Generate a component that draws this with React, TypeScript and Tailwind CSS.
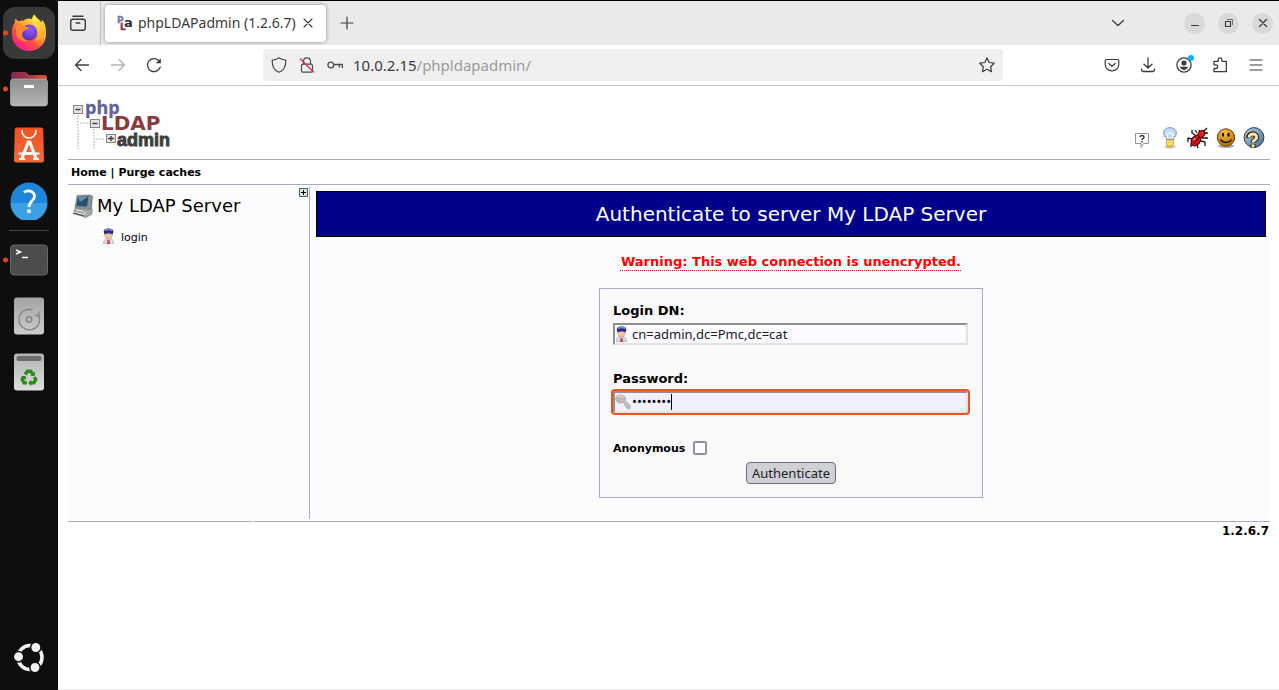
import type { ReactNode } from "react";

/* ---------- Dock icons ---------- */

function FirefoxIcon() {
  return (
    <svg width="36" height="38" viewBox="0 0 36 38" aria-hidden="true">
      <defs>
        <linearGradient id="fxBody" x1="0.85" y1="0.1" x2="0.2" y2="0.95">
          <stop offset="0" stopColor="#ffe94e" />
          <stop offset="0.35" stopColor="#ffa42e" />
          <stop offset="0.65" stopColor="#ff4a44" />
          <stop offset="1" stopColor="#f2179a" />
        </linearGradient>
        <linearGradient id="fxFlame" x1="0.3" y1="0" x2="0.8" y2="1">
          <stop offset="0" stopColor="#fff44f" />
          <stop offset="0.6" stopColor="#ffc22f" />
          <stop offset="1" stopColor="#ff9423" />
        </linearGradient>
        <radialGradient id="fxGlobe" cx="0.6" cy="0.3" r="0.75">
          <stop offset="0" stopColor="#9059ff" />
          <stop offset="1" stopColor="#5b2fb4" />
        </radialGradient>
      </defs>
      <path d="M1 15c.5-2.600 1.400-4.300 2.700-5.700C3.600 7.700 3.900 6 4.600 4.500c1 1.300 2 2.200 3.400 2.800 1.300-.7 2.900-.9 4.400-.6 3-3 9-3 12 .5 4.500 2.800 10.600 6 10.600 13.300C35 29.500 27.500 37 18 37S1 29.500 1 20.500z" fill="url(#fxBody)" />
      <path d="M23.300.5c-2.300 2-2.900 5.200-.8 7.700 2.500 2.900 5.500 5.500 5.500 10.300 0 3.500-1.600 6.500-4 8.500 5.500-1.200 9.800-4.200 10.800-9.200.6-4.300-1-9.300-4-12.300.1 1.300 0 2.200-.4 3C28.500 5 24.700 3.700 23.300.5z" fill="url(#fxFlame)" />
      <circle cx="18.300" cy="18.500" r="8" fill="url(#fxGlobe)" />
      <path d="M5.500 12.500c2.500-1.800 5.500-1.700 7.500-.5 1.500 1.100 3.200 1 5 1.200-.3 2-2.300 2.600-4.300 3.300-1.700.7-1.500 1.900-2.700 2.900-.5 4 2.900 7.300 7 7.300-5.500 2-12.500-1.300-13-8.200-.1-2.200.2-4.200.5-6z" fill="#ff8a30" />
    </svg>
  );
}

function FilesIcon() {
  return (
    <svg width="38" height="36" viewBox="0 0 38 36" aria-hidden="true">
      <defs>
        <linearGradient id="flBack" x1="0" y1="0" x2="1" y2="0">
          <stop offset="0" stopColor="#7b2952" />
          <stop offset="0.6" stopColor="#a93a45" />
          <stop offset="1" stopColor="#ea5a25" />
        </linearGradient>
        <linearGradient id="flFront" x1="0" y1="0" x2="0" y2="1">
          <stop offset="0" stopColor="#8d8d8d" />
          <stop offset="1" stopColor="#b5b5b5" />
        </linearGradient>
      </defs>
      <path d="M1 4q0-3 3-3h11q1.500 0 2.500 1.500L19 4h15q3 0 3 3v10H1z" fill="url(#flBack)" />
      <rect x="0.500" y="8" width="37" height="27" rx="3" fill="url(#flFront)" stroke="#d0d0d0" strokeWidth="0.500" />
      <rect x="14" y="14" width="10" height="3" rx="0.500" fill="#fff" />
    </svg>
  );
}

function SoftwareIcon() {
  return (
    <svg width="30" height="36" viewBox="0 0 30 36" aria-hidden="true">
      <defs>
        <linearGradient id="swBag" x1="0" y1="0" x2="0" y2="1">
          <stop offset="0" stopColor="#f4511f" />
          <stop offset="1" stopColor="#ee6c3a" />
        </linearGradient>
      </defs>
      <path d="M3 .5h24q2 0 2.200 2L30 33q0 2.500-2.500 2.500h-25Q0 35.500 0 33L.8 2.500Q1 .5 3 .5z" fill="url(#swBag)" />
      <path d="M8 3v1a7 7 0 0 0 14 0V3" fill="none" stroke="#fff" strokeWidth="1.600" />
      <path d="M8 31.500 14.200 15h1.600L22 31.500M9 26.500h12" fill="none" stroke="#fff" strokeWidth="3" />
      <path d="M5 32h6M19 32h6M4.500 26.500h21" fill="none" stroke="#fff" strokeWidth="2.200" />
    </svg>
  );
}

function HelpDockIcon() {
  return (
    <svg width="38" height="38" viewBox="0 0 38 38" aria-hidden="true">
      <circle cx="19" cy="19" r="18.500" fill="#1d86da" />
      <path d="M.5 21h37a18.500 18.500 0 0 1-37 0z" fill="#3b9fe3" />
      <path d="M14 10.500c2.500-2 5.500-2 8-.7 3.600 2.400 3 6.600.2 9-2 1.800-3.200 3-3.200 6.200" fill="none" stroke="#fff" strokeWidth="2.800" />
      <circle cx="19" cy="29.300" r="2" fill="#fff" />
    </svg>
  );
}

function TerminalIcon() {
  return (
    <svg width="38" height="32" viewBox="0 0 38 32" aria-hidden="true">
      <rect x="0.500" y="1" width="37" height="30" rx="3.500" fill="#4c4c4c" stroke="#686868" />
      <path d="M6 6l4.500 2L6 10M12 13.500h6" fill="none" stroke="#fff" strokeWidth="1.500" />
    </svg>
  );
}

function DiskIcon() {
  return (
    <svg width="32" height="38" viewBox="0 0 32 38" aria-hidden="true">
      <defs>
        <linearGradient id="dkBody" x1="0" y1="0" x2="0" y2="1">
          <stop offset="0" stopColor="#a2a2a2" />
          <stop offset="1" stopColor="#cdcdcd" />
        </linearGradient>
      </defs>
      <rect x="1" y="0.500" width="30" height="37" rx="3" fill="url(#dkBody)" />
      <path d="M25.500 18A10.300 10.300 0 1 1 19.500 12.800" fill="none" stroke="#848484" strokeWidth="1.300" />
      <path d="M26 14.500v4h-4" fill="none" stroke="#848484" strokeWidth="1.300" />
      <circle cx="16" cy="22.500" r="2.700" fill="none" stroke="#848484" strokeWidth="1.500" />
    </svg>
  );
}

function TrashIcon() {
  return (
    <svg width="32" height="38" viewBox="0 0 32 38" aria-hidden="true">
      <defs>
        <linearGradient id="trBody" x1="0" y1="0" x2="0" y2="1">
          <stop offset="0" stopColor="#b4b4b4" />
          <stop offset="1" stopColor="#dedede" />
        </linearGradient>
      </defs>
      <rect x="1" y="0.500" width="30" height="37" rx="3" fill="url(#trBody)" />
      <rect x="3.500" y="3" width="25" height="5" rx="2" fill="#6c6c6c" />
      <g fill="none" stroke="#2a8b18" strokeWidth="3.400">
        <path d="M12.300 21.500l2-3.300h3.400l1.800 2.800" />
        <path d="M21.300 24l1.400 2.500-1.800 3.400h-3.700" />
        <path d="M14 29.900h-2.900l-1.900-3.400 1.700-3" />
      </g>
      <path d="M21.800 18.500v4.500h-4.500zM18.300 26.800v6.200l-3.300-3.100zM7.800 23h4.700l1 4.300z" fill="#2a8b18" />
    </svg>
  );
}

function UbuntuIcon() {
  return (
    <svg width="32" height="32" viewBox="0 0 32 32" aria-hidden="true">
      <circle cx="17" cy="15.500" r="12" fill="none" stroke="#f2f2f2" strokeWidth="3.600" />
      <g fill="#f2f2f2" stroke="#0e0e0e" strokeWidth="1.500">
        <circle cx="5.500" cy="14.700" r="5.200" />
        <circle cx="22.800" cy="5.500" r="5.200" />
        <circle cx="22" cy="25.500" r="5.200" />
      </g>
    </svg>
  );
}

function DockItem({ label, running = false, active = false, children }: { label: string; running?: boolean; active?: boolean; children: ReactNode }) {
  return (
    <button type="button" aria-label={label} className="relative flex h-14 w-full items-center justify-center">
      {running && <span className="absolute top-1/2 left-[3px] size-[5px] -translate-y-1/2 rounded-full bg-[#e0481b]" />}
      {active ? <span className="flex size-[52px] items-center justify-center rounded-xl bg-[#393939]">{children}</span> : children}
    </button>
  );
}

function Dock() {
  return (
    <nav aria-label="Dock" className="flex w-[58px] shrink-0 flex-col bg-[#0e0e0e] pt-[5px] pb-1">
      <DockItem label="Firefox" running active><FirefoxIcon /></DockItem>
      <DockItem label="Files" running><FilesIcon /></DockItem>
      <DockItem label="Software"><SoftwareIcon /></DockItem>
      <DockItem label="Help"><HelpDockIcon /></DockItem>
      <div className="flex h-[3px] items-center px-[9px]"><div className="h-px w-full bg-[#454545]" /></div>
      <DockItem label="Terminal" running><TerminalIcon /></DockItem>
      <DockItem label="Disk"><DiskIcon /></DockItem>
      <DockItem label="Trash"><TrashIcon /></DockItem>
      <div className="mt-auto"><DockItem label="Show applications"><UbuntuIcon /></DockItem></div>
    </nav>
  );
}

/* ---------- Browser chrome icons ---------- */

function Line({ size = 16, width = 1.2, className = "", children }: { size?: number; width?: number; className?: string; children: ReactNode }) {
  return (
    <svg width={size} height={size} viewBox={`0 0 ${size} ${size}`} fill="none" stroke="currentColor" strokeWidth={width} strokeLinecap="round" strokeLinejoin="round" className={className} aria-hidden="true">
      {children}
    </svg>
  );
}

function Favicon() {
  return (
    <svg width="16" height="16" viewBox="0 0 16 16" className="shrink-0" aria-hidden="true" fontFamily="DejaVu Sans" fontWeight="700">
      <text x="0" y="8" fontSize="9" fill="#7b7bb5" stroke="#7b7bb5" strokeWidth="0.400">P</text>
      <text x="3" y="15" fontSize="9" fill="#8c3a3a" stroke="#8c3a3a" strokeWidth="0.400">L</text>
      <text x="7" y="12" fontSize="13" fill="#2c2c34">a</text>
    </svg>
  );
}

function TabStrip() {
  return (
    <div className="flex h-11 items-center bg-[#eaeaea] text-[#3b3b3b]">
      <button type="button" aria-label="Recent browsing" className="flex h-full w-[43px] items-center justify-center border-r border-[#bdbdbd] pr-[3px]">
        <Line size={18} width={1.4}>
          <rect x="1.700" y="5.200" width="14.600" height="11" rx="2.200" />
          <path d="M4 2.200h10M7.200 9h3.600" />
        </Line>
      </button>
      <div className="ml-1 flex h-[37px] w-[221px] items-center rounded bg-white pr-[11px] pl-3 shadow-[0_0_4px_rgba(0,0,0,0.4)]">
        <Favicon />
        <span className="ml-[5px] min-w-0 flex-1 font-['Noto_Sans',sans-serif] text-sm whitespace-nowrap">phpLDAPadmin (1.2.6.7)</span>
        <button type="button" aria-label="Close tab">
          <Line size={14} width={1.1}><path d="M3 3l8 8M11 3l-8 8" /></Line>
        </button>
      </div>
      <button type="button" aria-label="New tab" className="ml-[14px]">
        <Line size={14}><path d="M7 1v12M1 7h12" /></Line>
      </button>
      <div className="ml-auto flex items-center gap-[13px] pr-1.5">
        <button type="button" aria-label="List all tabs" className="mr-[46px]">
          <Line size={14} width={1.3}><path d="M1.500 4.500L7 9.500l5.500-5" /></Line>
        </button>
        <button type="button" aria-label="Minimize" className="flex size-[21px] items-center justify-center rounded-full bg-[#d9d9d9]">
          <Line size={10}><path d="M1.500 7.500h7" /></Line>
        </button>
        <button type="button" aria-label="Restore" className="flex size-[21px] items-center justify-center rounded-full bg-[#d9d9d9]">
          <Line size={10}><path d="M1.500 3.500h5v5h-5z" /><path d="M3.500 1.500h5v5" strokeWidth="0.700" /></Line>
        </button>
        <button type="button" aria-label="Close" className="flex size-[21px] items-center justify-center rounded-full bg-[#d9d9d9]">
          <Line size={10} width={1.4}><path d="M1.500 1.500l7 7M8.500 1.500l-7 7" /></Line>
        </button>
      </div>
    </div>
  );
}

function Toolbar() {
  return (
    <div className="flex h-[41px] items-center border-b border-[#c9c9c9] bg-white text-[#3b3b3b]">
      <div className="flex w-[205px] shrink-0 items-center gap-5 pl-4">
        <button type="button" aria-label="Back"><Line width={1.3}><path d="M1.500 8h13M7 2.500L1.500 8 7 13.500" /></Line></button>
        <button type="button" aria-label="Forward" className="text-[#b3b3b3]"><Line width={1.3}><path d="M1.500 8h13M9 2.500L14.500 8 9 13.500" /></Line></button>
        <button type="button" aria-label="Reload">
          <Line width={1.3}><path d="M14.200 10.200A6.500 6.500 0 1 1 12.600 3.400l1.500 1.500" /><path d="M14.800 1.300v5H9.800z" fill="currentColor" stroke="none" /></Line>
        </button>
      </div>
      <div className="flex h-8 w-[740px] min-w-0 items-center rounded bg-[#f0f0f0] px-2">
        <Line className="shrink-0 text-[#4a4a4a]"><path d="M8 .8c2 1.500 4 2.300 6.800 2.400C15 9.500 12.800 13.500 8 15.300 3.200 13.500 1 9.500 1.200 3.200 4 3.100 6 2.300 8 .8z" /></Line>
        <Line className="ml-3 shrink-0 text-[#4a4a4a]">
          <rect x="2.500" y="7.200" width="11" height="8" rx="1.500" />
          <path d="M4.500 7V4.300a3.500 3.500 0 0 1 7 0V7" />
          <path d="M1.500 2l13 13" stroke="#e22850" strokeWidth="1.400" />
        </Line>
        <Line width={1.3} className="ml-3 shrink-0 text-[#4a4a4a]"><circle cx="3.800" cy="8" r="2.900" /><path d="M6.800 7.500h8.500v3M12.300 7.500v2.500" /></Line>
        <div className="ml-2.5 flex-1 font-['Noto_Sans',sans-serif] text-[15px]">
          10.0.2.15<span className="text-[#9a9a9a]">/phpldapadmin/</span>
        </div>
        <button type="button" aria-label="Bookmark">
          <Line><path d="M8 .9l2.200 4.600 5 .7-3.600 3.500.9 5L8 12.300l-4.500 2.400.9-5L.8 6.200l5-.7z" /></Line>
        </button>
      </div>
      <div className="ml-auto flex items-center gap-5 pr-[15px]">
        <button type="button" aria-label="Pocket"><Line><path d="M2.500 2.500h11q1.300 0 1.300 1.300V7.500A6.800 6.300 0 0 1 1.200 7.500V3.800q0-1.300 1.300-1.300zM4.800 6.500L8 9.300l3.200-2.800" /></Line></button>
        <button type="button" aria-label="Downloads"><Line width={1.3}><path d="M8 .8v10M4 7.200l4 3.800 4-3.800M1.500 11.800v1q0 1.700 1.700 1.700h9.600q1.700 0 1.700-1.700v-1" /></Line></button>
        <button type="button" aria-label="Account" className="relative">
          <Line width={1.3}><circle cx="8" cy="8" r="7.100" /><circle cx="8" cy="6" r="1.900" fill="currentColor" /><path d="M4.300 10h7.400c-.7 2-2 2.700-3.700 2.700S5 12 4.300 10z" fill="currentColor" strokeWidth="0.500" /></Line>
          <span className="absolute -top-0.5 -right-0.5 size-1.5 rounded-full bg-[#00b3f4]" />
        </button>
        <button type="button" aria-label="Extensions">
          <Line width={1.3}><path d="M2 5.500V4.300h4.300V2.600a1.800 1.800 0 0 1 3.600 0v1.700h4.400v10.400H2v-3.200h1.900a1.800 1.800 0 0 0 0-3.600H2z" /></Line>
        </button>
        <button type="button" aria-label="Menu"><Line><path d="M2 3h12M2 8h12M2 13h12" /></Line></button>
      </div>
    </div>
  );
}

/* ---------- phpLDAPadmin page ---------- */

function Logo() {
  return (
    <svg width="104" height="52" viewBox="0 0 104 52" overflow="visible" role="img" aria-label="phpLDAPadmin">
      <path d="M6 17v34M22 31v20M8 25h10M24 41h9" fill="none" stroke="#cfcfcf" strokeWidth="2" strokeDasharray="1.500 1.500" />
      <g fill="#e4e4e4" stroke="#858585">
        <rect x="1.500" y="7.500" width="9" height="8" />
        <rect x="18.500" y="21.500" width="9" height="8" />
        <rect x="34.500" y="36.500" width="9" height="8" />
      </g>
      <path d="M3.500 11.500h5M20.500 25.500h5M36 40.500h6M39 38v5" stroke="#444" strokeWidth="1.400" />
      <text x="13" y="16" fill="#62629c" stroke="#62629c" strokeWidth="0.300" fontFamily="Open Sans" fontWeight="700" fontSize="18">php</text>
      <text x="29" y="32" fill="#893b3f" fontFamily="DejaVu Sans" fontWeight="700" fontSize="20">LDAP</text>
      <text x="45" y="48" fill="#3f3f3f" stroke="#3f3f3f" strokeWidth="0.900" fontFamily="Liberation Sans" fontWeight="700" fontSize="18">admin</text>
    </svg>
  );
}

function RequestIcon() {
  return (
    <svg width="16" height="18" viewBox="0 0 16 18" aria-hidden="true">
      <path d="M1.500 2.500h13v10h-5l-2.500 4v-4H1.500z" fill="#fff" stroke="#959595" />
      <path d="M6 6c.5-2 4-1.800 4 .2C10 7.500 8 7.500 8 9M8 10v1.500" fill="none" stroke="#3b3b3b" strokeWidth="1.500" />
    </svg>
  );
}

function BulbIcon() {
  return (
    <svg width="14" height="22" viewBox="0 0 14 22" aria-hidden="true">
      <ellipse cx="7" cy="20" rx="6" ry="1.500" fill="#ccc" />
      <path d="M4 13c0-2-3.300-3-3.300-7C.7 2.500 3.500.7 7 .7s6.300 1.800 6.300 5.300c0 4-3.300 5-3.300 7z" fill="#c5dbf6" stroke="#7390c4" />
      <path d="M5 12l-1-5 3-1.500L10 7l-1 5" fill="none" stroke="#fff" />
      <path d="M3.500 12.500h7v6l-2 1.500h-3l-2-1.500z" fill="#f2cc3e" stroke="#9e7820" strokeWidth="0.600" />
      <path d="M3.500 14.500h7M3.500 17h7" stroke="#fff4ab" />
    </svg>
  );
}

function BugIcon() {
  return (
    <svg width="22" height="22" viewBox="0 0 22 22" aria-hidden="true">
      <path d="M8 8L5 6V3M5 12L1 11v4M7 16l-3 1v3M10 18l1 3M14 14l4 1v4M15 11h6M13 6l-1-3M17 4l3-3M18 6h3M10 6L8 3" fill="none" stroke="#171717" strokeWidth="1.300" />
      <ellipse cx="9" cy="13.500" rx="4.200" ry="6" transform="rotate(38 9 13.500)" fill="#d90e16" stroke="#390000" />
      <ellipse cx="14.500" cy="7" rx="3" ry="3.800" transform="rotate(42 14.500 7)" fill="#ee1622" stroke="#390000" />
      <path d="M13 9l-6 8" stroke="#390000" />
      <path d="M8 11l-1.500 2" stroke="#fff" />
    </svg>
  );
}

function SmileIcon() {
  return (
    <svg width="20" height="20" viewBox="0 0 20 20" aria-hidden="true">
      <defs><radialGradient id="smile" cx="0.400" cy="0.250" r="0.800"><stop offset="0" stopColor="#f5be42" /><stop offset="1" stopColor="#b36c00" /></radialGradient></defs>
      <ellipse cx="10" cy="18" rx="8" ry="2" fill="#aaa" />
      <circle cx="10" cy="9.500" r="8.700" fill="url(#smile)" stroke="#65430c" />
      <ellipse cx="7" cy="6.800" rx="1.100" ry="2" /><ellipse cx="12.500" cy="6.800" rx="1.100" ry="2" />
      <path d="M4.500 11.500c3 4 8.500 4 11 0" fill="none" stroke="#201300" strokeWidth="1.300" />
    </svg>
  );
}

function HelpIcon() {
  return (
    <svg width="22" height="22" viewBox="0 0 22 22" aria-hidden="true">
      <defs><linearGradient id="helpBall" x1="0" y1="0" x2="1" y2="1"><stop offset="0" stopColor="#bdd2e4" /><stop offset="1" stopColor="#426b92" /></linearGradient></defs>
      <circle cx="11" cy="10.500" r="9.900" fill="url(#helpBall)" stroke="#313e4b" />
      <path d="M5.500 11c-.5-5.500 9-5.500 8-.3-.4 2.300-3.500 2.300-3.500 5M10 17.300v3.700" fill="none" stroke="#241e10" strokeWidth="5" />
      <path d="M6 10.500c0-4.700 8-4.700 7.500.2-.4 2.300-3.500 2.300-3.500 4.800M10 17.500v3" fill="none" stroke="#ffe9ae" strokeWidth="3" />
    </svg>
  );
}

function ServerIcon() {
  return (
    <svg width="22" height="24" viewBox="0 0 22 24" aria-hidden="true">
      <path d="M5 1.500L17.500 1l3 1-1 12-3 1.500L3 14z" fill="#899093" stroke="#5f686a" strokeWidth="0.600" />
      <path d="M6 3l10.500-.5-1.500 10L4.500 12z" fill="#245071" />
      <path d="M6 3l10.500-.5L8 8z" fill="#5e8fad" />
      <path d="M3 14.500l12 2 5-2V20l-6 3.500L1 20z" fill="#a5aaa4" stroke="#626b66" strokeWidth="0.600" />
      <path d="M1 18l11 2.500 2-3M1 20.500l11 3M4 15.500l8 2" fill="none" stroke="#efefea" />
      <path d="M2 19l10 3" stroke="#39443f" />
    </svg>
  );
}

function UserIcon() {
  return (
    <svg width="14" height="16" viewBox="0 0 14 16" className="shrink-0" aria-hidden="true">
      <path d="M1.500 16q0-4.500 2.500-5.500h5q2.500 1 2.500 5.500z" fill="#d9dfeb" stroke="#9298ab" strokeWidth="0.600" />
      <path d="M5 11.500l1.500 1 1.500-1-.5 2 .5 2.500H5l.5-2.500z" fill="#dc352d" />
      <ellipse cx="6.500" cy="6.500" rx="3.900" ry="4.500" fill="#f1c69d" stroke="#b78158" strokeWidth="0.500" />
      <path d="M1.800 4C1.500 1.500 3.500.5 6.500.5s5 1 4.900 3.500l-.9 2.200-4-1-4 1z" fill="#28288a" />
      <path d="M2.800 2.600c1.700-1.700 5.700-1.700 7.400 0" fill="none" stroke="#7791c5" strokeWidth="2" />
    </svg>
  );
}

function KeyIcon() {
  return (
    <svg width="16" height="16" viewBox="0 0 16 16" className="shrink-0" aria-hidden="true">
      <path d="M1 3.500C2.500 0 8.500 0 10.500 4l-.3 2.500 5 5v3l-2 .7-2-2v-1.500l-1.700-.7v-1.500L8 8.500C4.500 10-.5 7.500 1 3.500z" fill="#bcbcb6" stroke="#a3a39d" strokeWidth="0.700" />
      <path d="M3.500 2.500c2-1 4-.5 5 1.500" fill="none" stroke="#ececea" />
      <path d="M9.500 7l4.500 5" fill="none" stroke="#dcdcd8" strokeWidth="0.700" />
    </svg>
  );
}

function TreePanel() {
  return (
    <aside className="relative w-[242px] shrink-0 border-r border-[#aaaacc] bg-[#fcfcfe] pt-[7px] pl-1">
      <button type="button" aria-label="Expand tree" className="absolute top-px right-px">
        <svg width="9" height="9" viewBox="0 0 9 9" aria-hidden="true"><path d="M.5.500h8v8h-8z" fill="#d7e7e7" stroke="#4a5659" /><path d="M2 4.500h5M4.500 2v5" stroke="#000" /></svg>
      </button>
      <div className="flex h-6 items-center gap-[3px]">
        <ServerIcon />
        <h2 className="text-lg leading-6 whitespace-nowrap">My LDAP Server</h2>
      </div>
      <a href="#login" className="mt-2 ml-[30px] flex items-center gap-[5px] text-[11px]"><UserIcon /><span className="pt-1">login</span></a>
    </aside>
  );
}

function LoginForm() {
  return (
    <form className="mx-auto mt-[18px] h-[210px] w-[384px] border border-[#aaaacc] bg-[#f9f9f9] px-[13px] pt-3" onSubmit={(e) => e.preventDefault()}>
      <label htmlFor="login" className="block text-[13px] leading-5 font-bold">Login DN:</label>
      <div className="mt-0.5 flex h-[22px] w-[355px] items-center border-2 border-t-[#8f8f8f] border-r-[#e3e3e3] border-b-[#e3e3e3] border-l-[#8f8f8f] bg-[#fafaff]">
        <UserIcon />
        <input id="login" type="text" defaultValue="cn=admin,dc=Pmc,dc=cat" className="ml-[3px] min-w-0 flex-1 bg-transparent font-['Noto_Sans',sans-serif] text-[13px] leading-4 text-[#1d1d1d] outline-none" />
      </div>
      <label htmlFor="password" className="mt-6 block text-[13px] leading-5 font-bold">Password:</label>
      <div className="relative mt-0.5 flex h-[22px] w-[355px] items-center rounded-xs border-2 border-t-[#8f8f8f] border-r-[#e3e3e3] border-b-[#e3e3e3] border-l-[#8f8f8f] bg-[#f0f0ff] outline-2 outline-[#e95420]">
        <KeyIcon />
        <input id="password" type="password" defaultValue="12345678" className="ml-px min-w-0 flex-1 bg-transparent font-['Noto_Sans',sans-serif] text-[13px] text-black outline-none" />
        <span className="absolute top-px left-14 h-4 w-px bg-black" />
      </div>
      <div className="mt-[26px] flex h-[18px] items-center">
        <label htmlFor="anonymous" className="pt-0.5 text-[11px] font-bold">Anonymous</label>
        <input id="anonymous" type="checkbox" className="ml-2 size-[14px] appearance-none rounded-xs border-2 border-[#8f8f9d] bg-white" />
      </div>
      <button type="submit" className="mx-auto mt-[5px] block h-[22px] w-[90px] rounded border border-[#6b6b77] bg-[#d0d0d7] font-['Noto_Sans',sans-serif] text-[13px] leading-5 text-[#1d1d1d]">Authenticate</button>
    </form>
  );
}

function Page() {
  return (
    <main className="flex-1 bg-white pr-[9px] pl-[10px] font-['DejaVu_Sans',sans-serif] text-black">
      <header className="flex h-[74px] items-end justify-between border-b border-[#aaaacc] pr-0.5 pb-[9px] pl-1">
        <Logo />
        <div className="flex items-center pb-px">
          <a href="#request" aria-label="Request feature" className="flex w-7 justify-center pt-1"><RequestIcon /></a>
          <a href="#donate" aria-label="Ideas" className="flex w-7 justify-center"><BulbIcon /></a>
          <a href="#bugs" aria-label="Report a bug" className="flex w-7 justify-center"><BugIcon /></a>
          <a href="#support" aria-label="Support" className="flex w-7 justify-center"><SmileIcon /></a>
          <a href="#help" aria-label="Help" className="flex w-7 justify-center"><HelpIcon /></a>
        </div>
      </header>
      <nav className="flex h-[25px] items-center border-b border-[#aaaacc] pt-0.5 pl-[3px] text-[11px] font-bold whitespace-pre">
        <a href="#home">Home</a> | <a href="#purge">Purge caches</a>
      </nav>
      <div className="mt-0.5 flex gap-0.5">
        <TreePanel />
        <section className="h-[332px] min-w-0 flex-1 bg-[#fcfcfe] p-1">
          <h1 className="flex h-[46px] items-center justify-center border border-black bg-[#00008b] text-xl text-white">Authenticate to server My LDAP Server</h1>
          <p className="mt-[17px] text-center text-[13px] leading-4 font-bold text-[#f00]"><span className="underline decoration-dotted decoration-1 underline-offset-4 [text-decoration-skip-ink:none]">Warning: This web connection is unencrypted.</span></p>
          <LoginForm />
        </section>
      </div>
      <footer className="mt-0.5">
        <div className="flex gap-0.5"><div className="h-px w-[184px] bg-[#aaaacc]" /><div className="h-px flex-1 bg-[#aaaacc]" /></div>
        <p className="pt-px pr-px text-right text-xs leading-4 font-bold">1.2.6.7</p>
      </footer>
    </main>
  );
}

export default function App() {
  return (
    <div className="flex min-h-screen bg-[#0e0e0e]">
      <Dock />
      <div className="flex min-w-0 flex-1 flex-col border-t border-b border-t-black border-b-[#ececec]">
        <TabStrip />
        <Toolbar />
        <Page />
      </div>
    </div>
  );
}
